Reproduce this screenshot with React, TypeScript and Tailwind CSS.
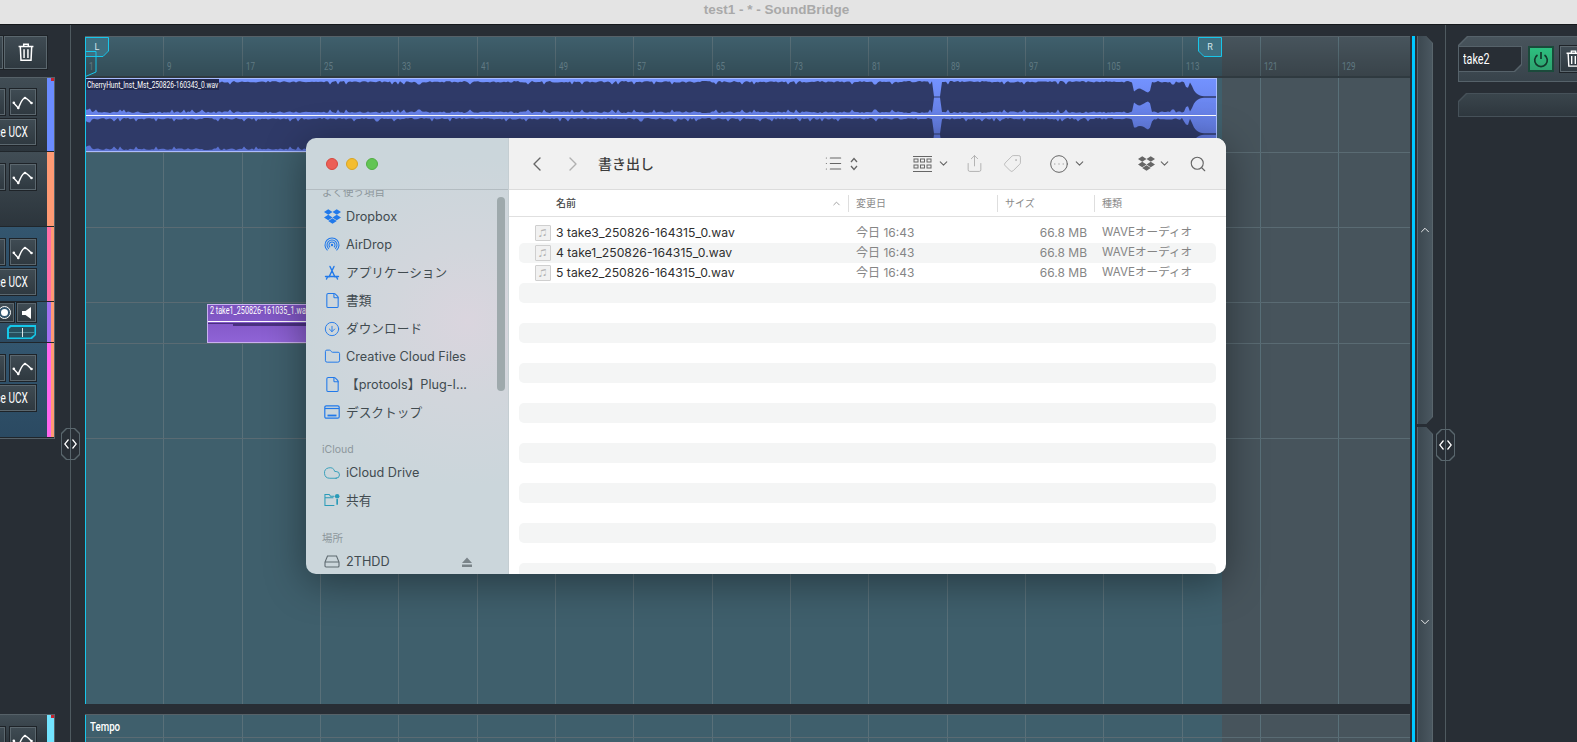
import { ChevronDown, ChevronLeft, ChevronRight, ChevronUp, CircleArrowDown, CircleEllipsis, Cloud, File, Folder, List, Search, Share, Tag } from "lucide-react";
import { FaDropbox } from "react-icons/fa";
import type { ReactNode } from "react";

const BARS = [1, 9, 17, 25, 33, 41, 49, 57, 65, 73, 81, 89, 97, 105, 113, 121, 129];

function noise(i: number) {
  const v = Math.sin(i * 12.9898) * 43758.5453;
  return v - Math.floor(v);
}

function ampAt(ax: number, i: number) {
  const n = noise(i);
  const spike = n > 0.92 ? 3.5 : n * 1.8;
  if (ax < 91) return 11 + n * 3;
  if (ax > 932 && ax < 940) return 0.6;
  if (ax > 1131 && ax < 1150) return 4 + 3.5 * Math.abs(Math.sin((ax - 1131) / 5)) + n;
  if (ax > 1183 && ax < 1188) return 9 + n;
  if (ax >= 1190) return Math.max(0.7, 14 * Math.exp(-(ax - 1190) / 4));
  return 16 - spike;
}

function channelPath(center: number, seed: number) {
  let top = "";
  let bottom = "";
  for (let x = 0; x <= 1132; x += 2) {
    const a = ampAt(x + 85, x + seed);
    top += `${x === 0 ? "M" : "L"}${x} ${(center - a).toFixed(1)} `;
    bottom = `L${x} ${(center + a).toFixed(1)} ` + bottom;
  }
  return top + bottom + "Z";
}

const waveTop = channelPath(18, 3);
const waveBottom = channelPath(55, 501);

function Narrow({ children, className }: { children: ReactNode; className?: string }) {
  return <span className={"inline-block whitespace-nowrap font-[Roboto,sans-serif] scale-x-[0.72] " + (className ?? "origin-left")}>{children}</span>;
}

function TrashIcon({ size = 16 }: { size?: number }) {
  return (
    <svg width={size} height={size * 1.15} viewBox="0 0 14 16" fill="none" stroke="white" strokeWidth="1.3">
      <path d="M0.5 3h13M5 3V1h4v2M2 3l.6 12h8.8L12 3M5.3 5.5v7.5M8.7 5.5v7.5" />
    </svg>
  );
}

function CurveIcon() {
  return (
    <svg width="24" height="24" viewBox="0 0 24 24" fill="none" stroke="white" strokeWidth="1.4">
      <path d="M2.5 12.7 L7.3 18 C9.5 14 11 8 14 8 C16.5 8 17.5 11 20.5 13" />
      <circle cx="2.8" cy="12.7" r="1.3" fill="white" stroke="none" />
      <circle cx="7.3" cy="18" r="1.3" fill="white" stroke="none" />
      <circle cx="14" cy="8" r="1.3" fill="white" stroke="none" />
      <circle cx="20.5" cy="13" r="1.3" fill="white" stroke="none" />
    </svg>
  );
}

function ToolButton({ children, className }: { children?: ReactNode; className?: string }) {
  return (
    <div className={"shrink-0 flex items-center justify-center border border-[#5b676e] bg-gradient-to-b from-[#3f4b53] to-[#2f3940] outline outline-1 outline-[#1e2328] " + (className ?? "w-[26px] h-[26px]")}>
      {children}
    </div>
  );
}

function TrackControls({ ucx, first }: { ucx?: boolean; first?: boolean }) {
  return (
    <div className={"flex flex-col items-end gap-1 pr-[11px] " + (first ? "pt-[11px]" : "pt-3")}>
      <div className="flex gap-[5px]">
        <ToolButton />
        <ToolButton>
          <CurveIcon />
        </ToolButton>
      </div>
      {ucx && (
        <ToolButton className="w-[90px] h-[26px] justify-end">
          <span className="w-full pr-[9px] text-right text-[14px] text-white">
            <Narrow className="origin-right">Fireface UCX</Narrow>
          </span>
        </ToolButton>
      )}
    </div>
  );
}

function Track({ h, bg, inner, outer, notch, children }: { h: string; bg: string; inner: string; outer: string; notch?: boolean; children: ReactNode }) {
  return (
    <div className={"relative flex w-[54px] border-b border-[#20262b] " + h}>
      <div className={"w-[47px] overflow-hidden flex flex-col items-end " + bg}>{children}</div>
      <div className={"w-[4px] " + inner} />
      <div className={"w-[3px] " + outer} />
      {notch && <div className="absolute right-0 top-0 w-[3px] h-[3px] bg-[#c4232f]" />}
    </div>
  );
}

function LeftPanel() {
  const plain = "bg-gradient-to-b from-[#414d55] to-[#2c353c]";
  const blue = "bg-gradient-to-b from-[#33566f] to-[#2b4a62]";
  return (
    <div className="w-[55px] shrink-0 flex flex-col pt-[11px] overflow-hidden">
      <div className="h-[41px] shrink-0 flex justify-end gap-[1px] pr-[8px]">
        <ToolButton className="w-[26px] h-[33px]" />
        <ToolButton className="w-[43px] h-[33px]">
          <TrashIcon />
        </ToolButton>
      </div>
      <div className="shrink-0 border-r border-b border-t border-[#566168] w-[55px]">
        <Track h="h-[74px]" bg={plain} inner="bg-[#6b8cff]" outer="bg-[#6b8cff]" notch>
          <TrackControls ucx first />
        </Track>
        <Track h="h-[75px]" bg={plain} inner="bg-[#ff9a74]" outer="bg-[#ff9a74]">
          <TrackControls />
        </Track>
        <Track h="h-[75px]" bg={blue} inner="bg-[#ff6fa8]" outer="bg-[#ff9a74]">
          <TrackControls ucx />
        </Track>
        <Track h="h-[41px]" bg={blue} inner="bg-[#a070f0]" outer="bg-[#ff9a74]">
          <div className="flex flex-col items-end gap-[3px] pr-[11px] pt-px">
            <div className="flex gap-[3px]">
              <ToolButton className="w-[19px] h-[19px]">
                <span className="w-[11px] h-[11px] rounded-full bg-white border-[2px] border-[#31556e] outline outline-1 outline-white" />
              </ToolButton>
              <ToolButton className="w-[19px] h-[19px]">
                <svg width="10" height="12" viewBox="0 0 10 12" fill="white">
                  <path d="M0 4h3.5L9 0v12L3.5 8H0z" />
                </svg>
              </ToolButton>
            </div>
            <div className="w-[29px] h-[14px] bg-[#14c8ea] p-[1.5px] [clip-path:polygon(3px_0,100%_0,100%_10px,calc(100%-4px)_100%,0_100%,0_3px)]">
              <div className="relative h-full bg-[#27505f] [clip-path:polygon(3px_0,100%_0,100%_8px,calc(100%-4px)_100%,0_100%,0_3px)]">
                <div className="absolute left-0 right-0 top-[5px] h-px bg-[#4d8493]" />
                <div className="absolute left-[13px] top-[1px] w-px h-[9px] bg-[#dfe6e8]" />
              </div>
            </div>
          </div>
        </Track>
        <Track h="h-[95px]" bg={blue} inner="bg-[#ff66ee]" outer="bg-[#ff9a74]">
          <TrackControls ucx />
        </Track>
      </div>
      <div className="shrink-0 mt-[275px] border-t border-[#566168] w-[55px] border-r">
        <Track h="h-[30px]" bg={plain} inner="bg-[#73e4ff]" outer="bg-[#73e4ff]" notch>
          <TrackControls />
        </Track>
      </div>
    </div>
  );
}

function GridLines() {
  return (
    <>
      <div className="absolute left-0 top-0 bottom-0 w-[1137px] bg-[#3f5f6c]" />
      <div className="absolute left-px top-0 bottom-0 right-0 flex">
        {BARS.map((b) => (
          <div key={b} className="w-[78.33px] shrink-0 border-r border-[#597079]" />
        ))}
      </div>
      <div className="absolute left-0 top-0 bottom-0 w-px bg-[#17c6ea] z-10" />
    </>
  );
}

function Row({ h, children }: { h: string; children?: ReactNode }) {
  return <div className={"relative shrink-0 border-b border-[#5a6b73] " + h}>{children}</div>;
}

function MasterClip() {
  return (
    <div className="w-[1132px] h-[74px] border border-[#a9bcff] bg-gradient-to-b from-[#7392ff] to-[#5a70cf] relative overflow-hidden">
      <svg width="1132" height="74" className="block">
        <path d={waveTop} fill="#2f3a68" />
        <path d={waveBottom} fill="#2f3a68" />
        <rect x="0" y="36" width="1132" height="1" fill="white" />
      </svg>
      <div className="absolute left-0 top-0 w-[133px] h-[11px] bg-[#232a50] text-[9.2px] leading-[11px] text-white pl-px overflow-hidden">
        <Narrow>CherryHunt_Inst_Mst_250826-160343_0.wav</Narrow>
      </div>
    </div>
  );
}

function TakeClip() {
  return (
    <div className="ml-[122px] mt-px w-[150px] h-[39px] border border-[#c9b0f0] bg-gradient-to-b from-[#7a52bd] to-[#8f63d6] relative overflow-hidden">
      <div className="h-[11px] text-[10px] leading-[11px] text-white pl-[2px]">
        <Narrow>2 take1_250826-161035_1.wav</Narrow>
      </div>
      <div className="absolute left-0 right-0 top-[16px] h-px bg-white" />
      <div className="absolute left-0 right-0 top-[18px] h-px bg-[#4a3080]" />
      <div className="absolute left-[25px] right-0 top-[18px] h-[3px] bg-[#4a3080]" />
    </div>
  );
}

function LoopMarker({ side }: { side: "L" | "R" }) {
  const shape = side === "L" ? "0.5,0.5 23.5,0.5 23.5,14 18,19.5 0.5,19.5" : "0.5,0.5 23.5,0.5 23.5,19.5 6,19.5 0.5,14";
  return (
    <div className={"absolute top-0 z-20 w-[24px] h-[20px] " + (side === "L" ? "left-0" : "left-[1113px]")}>
      <svg width="24" height="20" className="absolute inset-0">
        <polygon points={shape} fill="#3e6f80" stroke="#17c6ea" />
      </svg>
      <span className="absolute inset-0 text-center text-[9px] leading-[20px] text-[#d7e6ea] font-[Roboto,sans-serif]">{side}</span>
    </div>
  );
}

function Arrangement() {
  return (
    <div className="w-[1325px] shrink-0 pt-[11px] flex flex-col gap-[10px]">
      <div className="relative h-[668px] shrink-0 border-t border-[#566168] overflow-hidden">
        <div className="absolute inset-0 bg-[#47545c]" />
        <GridLines />
        <LoopMarker side="L" />
        <LoopMarker side="R" />
        <svg width="12" height="26" className="absolute left-0 top-[14px] z-20">
          <polygon points="0.5,0.5 11,0.5 11,21 0.5,25.5" fill="none" stroke="#17c6ea" />
        </svg>
        <div className="relative flex flex-col h-full">
          <div className="h-[41px] shrink-0 flex border-b-2 border-[#2f3a40] bg-gradient-to-b from-black/0 to-black/20">
            {BARS.map((b) => (
              <div key={b} className="w-[78.33px] shrink-0 flex items-end pl-[4px] pb-[1px] text-[11px] text-[#607a83]">
                <Narrow>{b}</Narrow>
              </div>
            ))}
          </div>
          <Row h="h-[75px]">
            <MasterClip />
          </Row>
          <Row h="h-[75px]" />
          <Row h="h-[75px]" />
          <Row h="h-[41px]">
            <TakeClip />
          </Row>
          <Row h="h-[95px]" />
          <div className="flex-1" />
        </div>
      </div>
      <div className="relative flex-1 border-t border-[#566168] overflow-hidden">
        <div className="absolute inset-0 bg-[#47545c]" />
        <GridLines />
        <div className="relative h-[23px] border-b border-[#5a6b73] pl-[5px] text-[13.5px] font-medium leading-[23px] text-white">
          <Narrow>Tempo</Narrow>
        </div>
      </div>
    </div>
  );
}

function Scroller() {
  return (
    <div className="w-[16px] shrink-0 pt-[11px] flex flex-col gap-[3px]">
      <div className="h-[388px] shrink-0 bg-[#59656c] pl-px pr-px [clip-path:polygon(0_0,9px_0,100%_7px,100%_calc(100%-7px),9px_100%,0_100%)]">
        <div className="h-full flex flex-col items-center pt-[187px] text-white bg-gradient-to-r from-[#3c4850] to-[#4a5760] [clip-path:polygon(0_0,8px_0,100%_7px,100%_calc(100%-7px),8px_100%,0_100%)]">
          <ChevronUp size={14} strokeWidth={1.5} />
        </div>
      </div>
      <div className="flex-1 bg-[#59656c] pl-px pr-px [clip-path:polygon(0_0,9px_0,100%_7px,100%_100%,0_100%)]">
        <div className="h-full flex flex-col items-center pt-[188px] text-white bg-gradient-to-r from-[#3c4850] to-[#4a5760] [clip-path:polygon(0_0,8px_0,100%_7px,100%_100%,0_100%)]">
          <ChevronDown size={14} strokeWidth={1.5} />
        </div>
      </div>
    </div>
  );
}

function RightPanel() {
  return (
    <div className="flex-1 pl-3 pt-[11px] flex flex-col gap-[11px] overflow-hidden">
      <div className="h-[46px] w-[140px] shrink-0 bg-[#56626a] p-px [clip-path:polygon(9px_0,100%_0,100%_100%,0_100%,0_9px)]">
        <div className="h-full bg-gradient-to-b from-[#48545c] to-[#38434b] pt-[9px] [clip-path:polygon(9px_0,100%_0,100%_100%,0_100%,0_9px)]">
          <div className="flex gap-[6px] -ml-px">
            <div className="w-[64px] h-[26px] shrink-0 bg-[#56626a] p-px [clip-path:polygon(0_0,100%_0,100%_calc(100%-7px),calc(100%-7px)_100%,0_100%)]">
              <div className="h-full bg-[#282e35] pl-1 text-[15px] leading-[23px] text-white [clip-path:polygon(0_0,100%_0,100%_calc(100%-7px),calc(100%-7px)_100%,0_100%)]">
                <Narrow>take2</Narrow>
              </div>
            </div>
            <div className="w-[26px] h-[26px] shrink-0 flex items-center justify-center border-2 border-[#1b4a3b] bg-gradient-to-b from-[#2cc07f] to-[#2ea26f]">
              <svg width="16" height="17" viewBox="0 0 16 17" fill="none" stroke="#123a2c" strokeWidth="1.7">
                <path d="M8 1v7M4.5 4a6.3 6.3 0 1 0 7 0" />
              </svg>
            </div>
            <ToolButton className="w-[26px] h-[26px]">
              <TrashIcon size={15} />
            </ToolButton>
          </div>
        </div>
      </div>
      <div className="h-[24px] w-[140px] shrink-0 bg-[#465159] p-px [clip-path:polygon(8px_0,100%_0,100%_100%,0_100%,0_8px)]">
        <div className="h-full bg-gradient-to-b from-[#3a454c] to-[#2e373e] [clip-path:polygon(8px_0,100%_0,100%_100%,0_100%,0_8px)]" />
      </div>
    </div>
  );
}

function Splitter({ className }: { className: string }) {
  return (
    <div className={"absolute w-[19px] h-[32px] z-10 bg-[#59666d] p-px [clip-path:polygon(5px_0,calc(100%-5px)_0,100%_5px,100%_calc(100%-5px),calc(100%-5px)_100%,5px_100%,0_calc(100%-5px),0_5px)] " + className}>
      <div className="relative h-full flex items-center justify-between px-[2px] bg-[#282e35] [clip-path:polygon(5px_0,calc(100%-5px)_0,100%_5px,100%_calc(100%-5px),calc(100%-5px)_100%,5px_100%,0_calc(100%-5px),0_5px)]">
        <div className="absolute left-[8px] top-0 bottom-0 w-px bg-[#59666d]" />
        <svg width="5" height="10" viewBox="0 0 5 10" fill="none" stroke="white" strokeWidth="1.2">
          <path d="M4.5 0.5L0.8 5l3.7 4.5" />
        </svg>
        <svg width="5" height="10" viewBox="0 0 5 10" fill="none" stroke="white" strokeWidth="1.2">
          <path d="M0.5 0.5L4.2 5 0.5 9.5" />
        </svg>
      </div>
    </div>
  );
}

/* sidebar glyphs */
const blueIcon = "#2179ea";

function AirDropIcon() {
  return (
    <svg width="16" height="16" viewBox="0 0 16 16" fill="none" stroke={blueIcon} strokeWidth="1.1">
      <path d="M3.5 13.4A7 7 0 1 1 12.5 13.4" />
      <path d="M4.8 11.85A5 5 0 1 1 11.2 11.85" />
      <path d="M6.1 10.3A3 3 0 1 1 9.9 10.3" />
      <circle cx="8" cy="8" r="1.2" fill={blueIcon} stroke="none" />
    </svg>
  );
}

function AppsIcon() {
  return (
    <svg width="16" height="16" viewBox="0 0 16 16" fill="none" stroke={blueIcon} strokeWidth="1.4" strokeLinecap="round">
      <path d="M6 1.5L11 12M10 1.5L5 12M1.5 11.5h13M3.7 11.5L2.5 14M12.3 11.5l1.2 2.5" />
    </svg>
  );
}

function DesktopIcon() {
  return (
    <svg width="16" height="14" viewBox="0 0 16 14" fill="none" stroke={blueIcon} strokeWidth="1.2">
      <rect x="0.8" y="0.8" width="14.4" height="12.4" rx="1.5" />
      <path d="M1 3.5h14" />
      <path d="M3.5 10.5h9" strokeWidth="1.8" />
    </svg>
  );
}

function SharedIcon() {
  return (
    <svg width="17" height="14" viewBox="0 0 17 14" fill="none" stroke="#2a9bb8" strokeWidth="1.1">
      <path d="M11 12.8H1V1.2h4.5L7 3h4M1 4.5h9" />
      <circle cx="14" cy="3" r="2.4" fill="#2a9bb8" stroke="none" />
      <path d="M14 6v6" strokeWidth="1.8" />
    </svg>
  );
}

function DriveIcon() {
  return (
    <svg width="16" height="13" viewBox="0 0 16 13" fill="none" stroke="#5f6a70" strokeWidth="1.1">
      <path d="M3.5 1h9L15 7v4a1 1 0 0 1-1 1H2a1 1 0 0 1-1-1V7z" />
      <path d="M1 7h14" />
    </svg>
  );
}

function SideHeading({ label, className }: { label: string; className: string }) {
  return <div className={"pl-4 text-[10.5px] leading-3 text-[#8d979c] " + className}>{label}</div>;
}

function SideItem({ icon, label, right }: { icon: ReactNode; label: string; right?: ReactNode }) {
  return (
    <div className="h-[27.9px] flex items-center text-[12.7px] text-[#414b50]">
      <div className="w-[40px] pl-[18px] pr-[6px] shrink-0 flex justify-center">{icon}</div>
      <span className="flex-1 whitespace-nowrap">{label}</span>
      {right}
    </div>
  );
}

function Sidebar() {
  return (
    <div className="w-[203px] shrink-0 flex flex-col relative border-r border-[#c5ced2] bg-[radial-gradient(circle_at_80%_42%,#dad5de_0%,#d2d6dc_25%,#cbd6db_55%)]">
      <div className="h-[52px] shrink-0 border-b border-[#b3bcc1] flex items-center gap-2 pl-5 pt-px">
        <span className="w-3 h-3 rounded-full bg-[#ec5f56] border border-[#d5493f]" />
        <span className="w-3 h-3 rounded-full bg-[#f4bd30] border border-[#d9a524]" />
        <span className="w-3 h-3 rounded-full bg-[#62c554] border border-[#52ad44]" />
      </div>
      <div className="flex-1 overflow-hidden">
        <div className="-mt-[3px]">
          <SideHeading label="よく使う項目" className="h-4" />
          <SideItem icon={<FaDropbox size={17} color={blueIcon} className="shrink-0" />} label="Dropbox" />
          <SideItem icon={<AirDropIcon />} label="AirDrop" />
          <SideItem icon={<AppsIcon />} label="アプリケーション" />
          <SideItem icon={<File size={17} color={blueIcon} strokeWidth={1.5} className="shrink-0" />} label="書類" />
          <SideItem icon={<CircleArrowDown size={16} color={blueIcon} strokeWidth={1.4} className="shrink-0" />} label="ダウンロード" />
          <SideItem icon={<Folder size={17} color={blueIcon} strokeWidth={1.4} className="shrink-0" />} label="Creative Cloud Files" />
          <SideItem icon={<File size={17} color={blueIcon} strokeWidth={1.5} className="shrink-0" />} label="【protools】Plug-I..." />
          <SideItem icon={<DesktopIcon />} label="デスクトップ" />
          <SideHeading label="iCloud" className="mt-[18px] h-[14.5px]" />
          <SideItem icon={<Cloud size={18} color="#2a9bb8" strokeWidth={1.2} className="shrink-0" />} label="iCloud Drive" />
          <SideItem icon={<SharedIcon />} label="共有" />
          <SideHeading label="場所" className="mt-[18.5px] h-[15px]" />
          <SideItem
            icon={<DriveIcon />}
            label="2THDD"
            right={
              <svg width="10" height="10" viewBox="0 0 10 10" fill="#7a8489" className="mr-[36px]">
                <path d="M5 0.5L10 6H0zM0 7.5h10V10H0z" />
              </svg>
            }
          />
        </div>
      </div>
      <div className="absolute left-[191px] top-[59px] w-2 h-[194px] rounded-full bg-[#9ea9ac]" />
    </div>
  );
}

const FILES = ["3 take3_250826-164315_0.wav", "4 take1_250826-164315_0.wav", "5 take2_250826-164315_0.wav"];

function FileIcon() {
  return (
    <div className="w-4 h-4 shrink-0 flex items-center justify-center border border-[#cfcfcf] bg-[#f1f1f1] text-[8px] leading-none text-[#b4b4b4] rounded-[1px]">♫</div>
  );
}

function Toolbar() {
  return (
    <div className="h-[52px] shrink-0 bg-[#f1f1f1] border-b border-[#dcdcdc] flex items-center text-[#666]">
      <ChevronLeft size={24} strokeWidth={1.4} className="ml-[16px] shrink-0" />
      <ChevronRight size={24} strokeWidth={1.4} className="ml-[12px] shrink-0 text-[#b0b0b0]" />
      <span className="ml-[13px] w-[224px] shrink-0 text-[14px] font-medium text-[#3c3c3c]">書き出し</span>
      <List size={19} strokeWidth={1.4} className="ml-[2px]" />
      <svg width="8" height="14" viewBox="0 0 8 14" fill="none" stroke="currentColor" strokeWidth="1.3" className="ml-[7px]">
        <path d="M1 5l3-3.5L7 5M1 9l3 3.5L7 9" />
      </svg>
      <svg width="19" height="16" viewBox="0 0 19 16" fill="none" stroke="currentColor" strokeWidth="1" className="ml-[55px]">
        <path d="M0 0.5h19M0 15.5h19" />
        <rect x="1" y="3" width="4" height="3" />
        <rect x="7.5" y="3" width="4" height="3" />
        <rect x="14" y="3" width="4" height="3" />
        <rect x="1" y="9" width="4" height="3" />
        <rect x="7.5" y="9" width="4" height="3" />
        <rect x="14" y="9" width="4" height="3" />
      </svg>
      <ChevronDown size={13} strokeWidth={2} className="ml-[5px]" />
      <Share size={19} strokeWidth={1.2} className="ml-[15px] text-[#b0b0b0]" />
      <Tag size={19} strokeWidth={1.2} className="ml-[19px] rotate-90 text-[#b8b8b8]" />
      <CircleEllipsis size={20} strokeWidth={1.2} className="ml-[27px]" />
      <ChevronDown size={13} strokeWidth={2} className="ml-[4px]" />
      <FaDropbox size={17} className="ml-[52px]" />
      <ChevronDown size={13} strokeWidth={2} className="ml-[3px]" />
      <Search size={18} strokeWidth={1.5} className="ml-[18px]" />
    </div>
  );
}

function FinderWindow() {
  return (
    <div className="absolute left-[306px] top-[113px] w-[920px] h-[436px] rounded-[10px] overflow-hidden flex z-30 shadow-[0_8px_40px_rgba(0,0,0,0.4)]">
      <Sidebar />
      <div className="flex-1 min-w-0 flex flex-col bg-white">
        <Toolbar />
        <div className="h-[27px] shrink-0 border-b border-[#e0e0e0] flex items-center text-[10px] text-[#8a8a8a]">
          <span className="w-[322px] pl-[47px] font-medium text-[#4a4a4a]">名前</span>
          <ChevronUp size={11} className="text-[#9a9a9a] mr-[6px]" />
          <span className="w-[149px] h-[17px] leading-[17px] border-l border-[#dedede] pl-[7px]">変更日</span>
          <span className="w-[97px] h-[17px] leading-[17px] border-l border-[#dedede] pl-[7px]">サイズ</span>
          <span className="h-[17px] leading-[17px] border-l border-[#dedede] pl-[7px]">種類</span>
        </div>
        <div className="flex-1 overflow-hidden pt-[6px] pl-[10px] pr-[10px]">
          {Array.from({ length: 18 }).map((_, i) => (
            <div key={i} className={"h-5 flex items-center rounded-[5px] text-[12.2px] " + (i % 2 === 1 ? "bg-[#f4f5f5]" : "")}>
              {FILES[i] && (
                <>
                  <div className="pl-4">
                    <FileIcon />
                  </div>
                  <span className="w-[305px] pl-[5px] text-[#2f2f2f] whitespace-nowrap">{FILES[i]}</span>
                  <span className="w-[120px] text-[#858585] text-[12px]">今日 16:43</span>
                  <span className="w-[111px] text-right text-[#858585] text-[12px]">66.8 MB</span>
                  <span className="pl-[15px] text-[#858585] text-[11.6px] whitespace-nowrap">WAVEオーディオ</span>
                </>
              )}
            </div>
          ))}
        </div>
      </div>
    </div>
  );
}

export default function App() {
  return (
    <div className="w-[1577px] h-[742px] overflow-hidden flex flex-col bg-[#282e35] font-[Inter,'Noto_Sans_CJK_JP',sans-serif]">
      <div className="h-[25px] shrink-0 bg-[#e4e4e4] border-b border-[#15191c] flex items-center justify-center pr-6 pb-1 font-['Liberation_Sans',sans-serif] text-[13.5px] font-bold text-[#a9a9a9]">
        test1 - * - SoundBridge
      </div>
      <div className="relative flex-1 flex min-h-0">
        <LeftPanel />
        <div className="w-[15px] shrink-0" />
        <div className="w-px shrink-0 bg-[#4f5a60]" />
        <div className="w-[14px] shrink-0" />
        <Arrangement />
        <div className="w-[2px] shrink-0" />
        <div className="w-[3px] shrink-0 mt-[11px] bg-[#00c8ff]" />
        <div className="w-[2px] shrink-0" />
        <Scroller />
        <div className="w-3 shrink-0" />
        <div className="w-px shrink-0 bg-[#4f5a60]" />
        <RightPanel />
        <Splitter className="left-[61px] top-[403px]" />
        <Splitter className="left-[1436px] top-[404px]" />
        <FinderWindow />
      </div>
    </div>
  );
}
